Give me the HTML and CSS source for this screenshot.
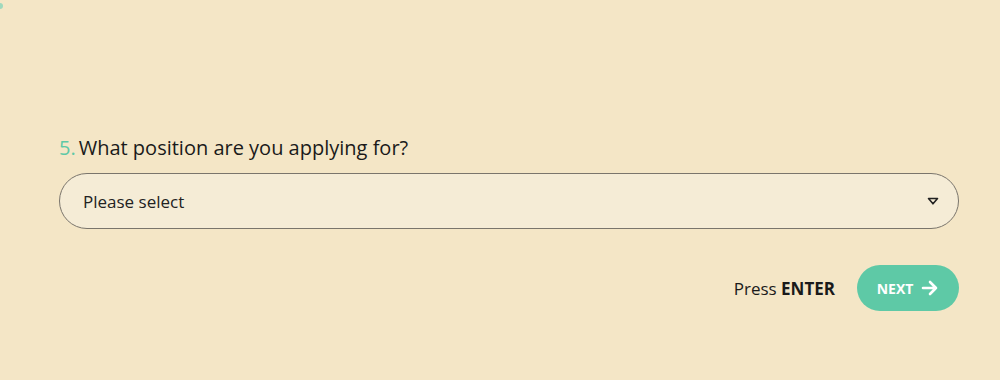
FILE: index.html
```html
<!DOCTYPE html>
<html>
<head>
<meta charset="utf-8">
<link rel="stylesheet" href="styles.css">
</head>
<body>
<div class="corner"></div>
<main class="form">
  <div class="question"><span class="num">5.</span>What position are you applying for?</div>
  <div class="select">
    <span class="placeholder">Please select</span>
    <svg class="caret" width="12" height="9" viewBox="0 0 12 9"><path d="M1.5 1.5 H10.5 L6 6.8 Z" fill="none" stroke="#222" stroke-width="1.6" stroke-linejoin="round"/></svg>
  </div>
  <div class="actions">
    <span class="hint">Press <b>ENTER</b></span>
    <button class="next">NEXT
      <svg width="18" height="16" viewBox="0 0 18 16"><path d="M2 8 H15 M9 2 L15 8 L9 14" fill="none" stroke="#fff" stroke-width="2.6" stroke-linecap="round" stroke-linejoin="round"/></svg>
    </button>
  </div>
</main>
</body>
</html>
```
FILE: styles.css
```css
html, body {
  margin: 0;
  padding: 0;
  background: #f4e6c6;
  font-family: "Open Sans", "Noto Sans", sans-serif;
  color: #1a1a1a;
}
body {
  width: 1000px;
  height: 380px;
  position: relative;
  overflow: hidden;
}
.corner {
  position: absolute;
  left: 0;
  top: 3px;
  width: 3px;
  height: 6px;
  background: #9fd9bd;
  border-radius: 0 3px 3px 0;
}
.form {
  padding: 134px 41px 0 59px;
}
.question {
  font-size: 20px;
  line-height: 28px;
  height: 28px;
}
.num {
  color: #5ec9a6;
  margin-right: 3px;
}
.select {
  margin-top: 11px;
  height: 56px;
  box-sizing: border-box;
  border: 1px solid #7a756c;
  border-radius: 28px;
  background: #f5ecd6;
  display: flex;
  align-items: center;
  justify-content: space-between;
  padding: 0 19px 0 23px;
  font-size: 17px;
}
.placeholder {
  color: #222;
}
.caret {
  display: block;
}
.actions {
  margin-top: 36px;
  display: flex;
  justify-content: flex-end;
  align-items: center;
  gap: 22px;
}
.hint {
  font-size: 17px;
  color: #1a1a1a;
}
.hint b {
  font-weight: 700;
}
.next {
  height: 46px;
  width: 102px;
  border: none;
  border-radius: 23px;
  background: #5ec9a6;
  color: #fff;
  font-family: "Open Sans", "Noto Sans", sans-serif;
  font-weight: 700;
  font-size: 14px;
  display: flex;
  align-items: center;
  justify-content: center;
  gap: 8px;
  padding: 0;
}
.next svg {
  display: block;
}
```
